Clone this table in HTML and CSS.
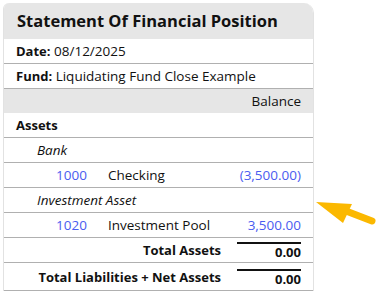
FILE: index.html
```html
<!DOCTYPE html>
<html>
<head>
<meta charset="utf-8">
<link rel="stylesheet" href="styles.css">
</head>
<body>
<div class="card">
  <div class="title">Statement Of Financial Position</div>
  <div class="meta"><b>Date:</b> 08/12/2025</div>
  <div class="meta"><b>Fund:</b> Liquidating Fund Close Example</div>
  <table class="report">
    <colgroup><col class="c-code"><col class="c-name"><col class="c-amt"></colgroup>
    <tr class="head"><td></td><td></td><td class="amt">Balance</td></tr>
    <tr><td colspan="3" class="section">Assets</td></tr>
    <tr><td colspan="3" class="group">Bank</td></tr>
    <tr><td class="code">1000</td><td class="name">Checking</td><td class="amt link">(3,500.00)</td></tr>
    <tr><td colspan="3" class="group">Investment Asset</td></tr>
    <tr><td class="code">1020</td><td class="name">Investment Pool</td><td class="amt link">3,500.00</td></tr>
    <tr class="total"><td colspan="2" class="tlabel">Total Assets</td><td class="amt"><span class="tval">0.00</span></td></tr>
    <tr class="total last"><td colspan="2" class="tlabel">Total Liabilities + Net Assets</td><td class="amt"><span class="tval">0.00</span></td></tr>
  </table>
</div>
<svg class="arrow" width="85" height="60" viewBox="0 0 85 60">
  <path d="M46 31 L72 41" stroke="#fbb800" stroke-width="7" stroke-linecap="round" fill="none"/>
  <polygon points="16,22 52,24 43,43" fill="#fbb800"/>
</svg>
</body>
</html>
```
FILE: styles.css
```css
body {
  margin: 0;
  font-family: "Open Sans", sans-serif;
  font-size: 13.5px;
  color: #111;
  background: #fff;
}
.card {
  margin: 3px 0 0 3px;
  width: 309px;
  border-left: 1px solid #e2e2e2;
  border-right: 1px solid #e2e2e2;
  border-radius: 6px 10px 0 0;
  overflow: hidden;
}
.title {
  background: #e6e6e6;
  height: 36px;
  line-height: 36px;
  padding-left: 13px;
  font-size: 16.5px;
  font-weight: 700;
}
.meta {
  height: 24px;
  line-height: 24px;
  padding-left: 12px;
  border-bottom: 1px solid #b0b0b0;
}
.meta b { font-weight: 700; font-size: 13px; }
.report {
  width: 309px;
  border-collapse: collapse;
  table-layout: fixed;
}
.c-code { width: 91px; }
.c-name { width: 142px; }
.c-amt { width: 76px; }
.report td {
  height: 24px;
  padding: 0;
  border-bottom: 1px solid #b0b0b0;
  white-space: nowrap;
  vertical-align: middle;
}
.report .head td {
  background: #e6e6e6;
  border-bottom: none;
}
.amt { text-align: right; padding-right: 12px !important; }
.section { font-weight: 700; font-size: 13px; padding-left: 12px !important; }
.group { font-style: italic; padding-left: 33px !important; }
.code { text-align: right; padding-right: 8px !important; color: #4a5cf0; }
.name { padding-left: 13px !important; }
.link { color: #4a5cf0; }
.tlabel { text-align: right; font-weight: 700; font-size: 13px; padding-right: 16px !important; }
.total td { height: 24px; }
.total.last td { height: 27px; }
.tval {
  display: block;
  border-top: 2px solid #111;
  margin-top: 3px;
  line-height: 17px;
  font-weight: 700;
  font-size: 13px;
}
.arrow {
  position: absolute;
  left: 300px;
  top: 180px;
}
```
